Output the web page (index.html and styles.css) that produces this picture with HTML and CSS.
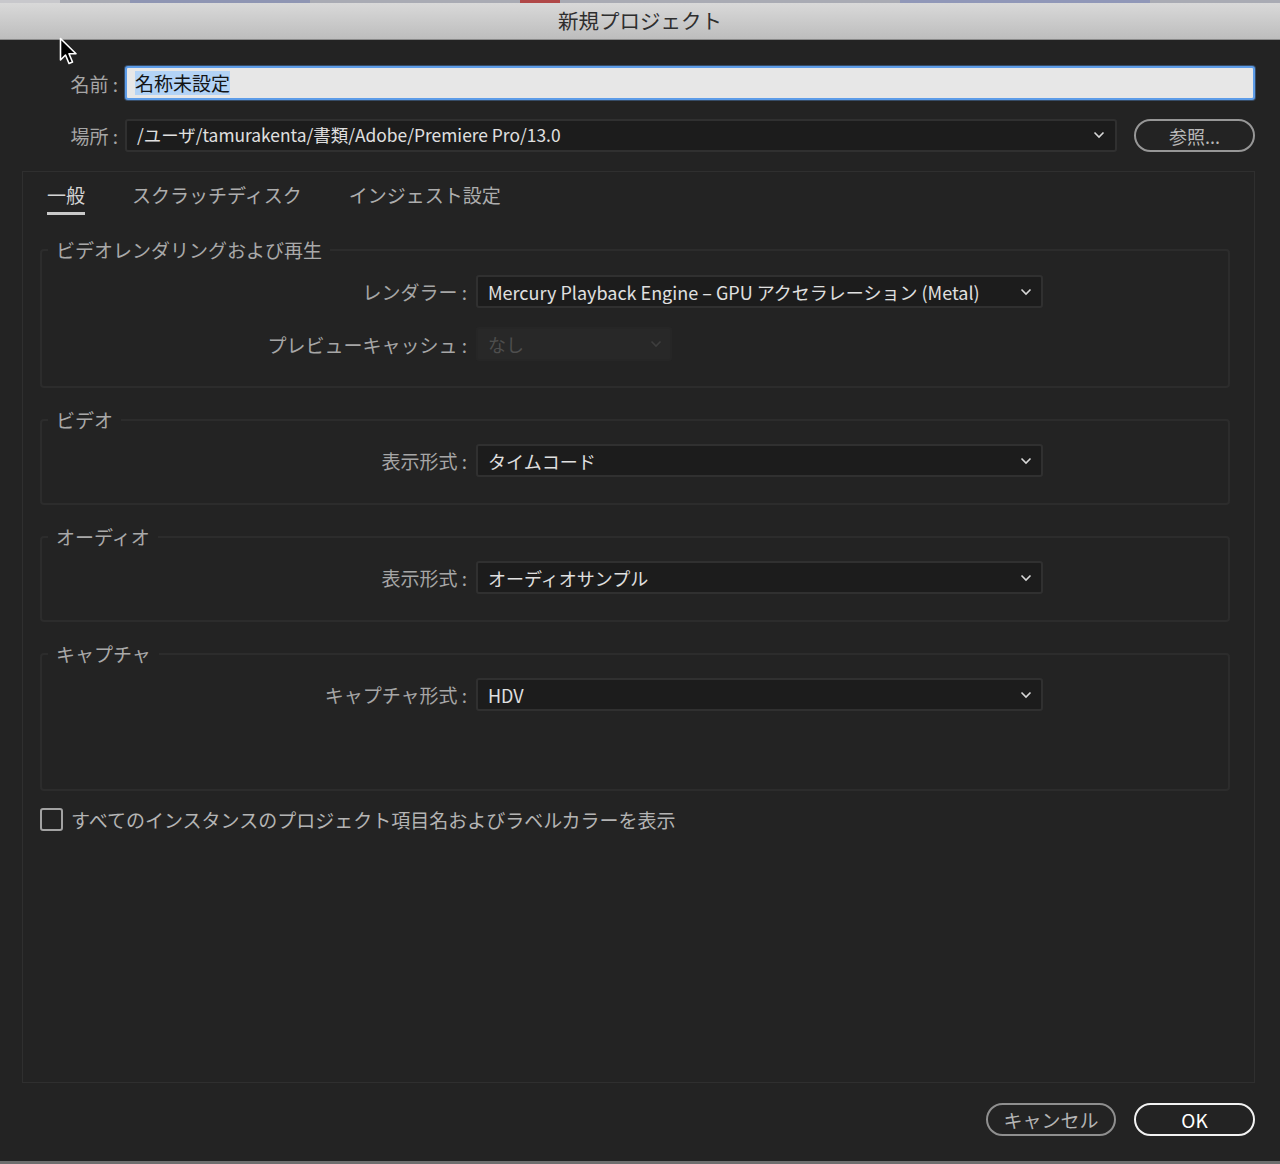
FILE: index.html
```html
<!DOCTYPE html>
<html lang="ja">
<head>
<meta charset="utf-8">
<title>新規プロジェクト</title>
<link rel="stylesheet" href="styles.css">
</head>
<body>
<div class="screen">
  <div class="desktop-strip"><span class="d1"></span><span class="d2"></span><span class="d3"></span><span class="d4"></span></div>
  <header class="titlebar">新規プロジェクト</header>
  <main class="dialog">
    <div class="form-row">
      <label class="row-label">名前 :</label>
      <div class="name-input"><span class="selected">名称未設定</span></div>
    </div>
    <div class="form-row">
      <label class="row-label">場所 :</label>
      <div class="location">
        <div class="select loc-select">
          <span class="select-text">/ユーザ/tamurakenta/書類/Adobe/Premiere Pro/13.0</span>
          <svg class="chev" width="12" height="8" viewBox="0 0 12 8"><polyline points="1.5,1.5 6,6 10.5,1.5" fill="none" stroke="#d8d8d8" stroke-width="1.6"/></svg>
        </div>
        <button class="pill browse">参照...</button>
      </div>
    </div>

    <section class="panel">
      <nav class="tabs">
        <span class="tab active">一般</span>
        <span class="tab">スクラッチディスク</span>
        <span class="tab">インジェスト設定</span>
      </nav>

      <fieldset class="group first">
        <legend>ビデオレンダリングおよび再生</legend>
        <div class="grow">
          <span class="glabel">レンダラー :</span>
          <div class="select">
            <span class="select-text">Mercury Playback Engine – GPU アクセラレーション (Metal)</span>
            <svg class="chev" width="12" height="8" viewBox="0 0 12 8"><polyline points="1.5,1.5 6,6 10.5,1.5" fill="none" stroke="#d8d8d8" stroke-width="1.6"/></svg>
          </div>
        </div>
        <div class="grow">
          <span class="glabel">プレビューキャッシュ :</span>
          <div class="select disabled">
            <span class="select-text">なし</span>
            <svg class="chev" width="12" height="8" viewBox="0 0 12 8"><polyline points="1.5,1.5 6,6 10.5,1.5" fill="none" stroke="#3e3e3e" stroke-width="1.6"/></svg>
          </div>
        </div>
      </fieldset>

      <fieldset class="group">
        <legend>ビデオ</legend>
        <div class="grow">
          <span class="glabel">表示形式 :</span>
          <div class="select">
            <span class="select-text">タイムコード</span>
            <svg class="chev" width="12" height="8" viewBox="0 0 12 8"><polyline points="1.5,1.5 6,6 10.5,1.5" fill="none" stroke="#d8d8d8" stroke-width="1.6"/></svg>
          </div>
        </div>
      </fieldset>

      <fieldset class="group">
        <legend>オーディオ</legend>
        <div class="grow">
          <span class="glabel">表示形式 :</span>
          <div class="select">
            <span class="select-text">オーディオサンプル</span>
            <svg class="chev" width="12" height="8" viewBox="0 0 12 8"><polyline points="1.5,1.5 6,6 10.5,1.5" fill="none" stroke="#d8d8d8" stroke-width="1.6"/></svg>
          </div>
        </div>
      </fieldset>

      <fieldset class="group capture">
        <legend>キャプチャ</legend>
        <div class="grow">
          <span class="glabel">キャプチャ形式 :</span>
          <div class="select">
            <span class="select-text">HDV</span>
            <svg class="chev" width="12" height="8" viewBox="0 0 12 8"><polyline points="1.5,1.5 6,6 10.5,1.5" fill="none" stroke="#d8d8d8" stroke-width="1.6"/></svg>
          </div>
        </div>
      </fieldset>

      <label class="check">
        <span class="box"></span>
        <span>すべてのインスタンスのプロジェクト項目名およびラベルカラーを表示</span>
      </label>
    </section>

    <footer class="actions">
      <button class="pill cancel">キャンセル</button>
      <button class="pill ok">OK</button>
    </footer>
  </main>
  <div class="bottom-strip"></div>

  <svg class="cursor" width="20" height="30" viewBox="0 0 20 30">
    <path d="M1.5,1.5 L1.5,23 L6.5,18 L10,26.5 L13.5,25 L10,16.8 L17,16.8 Z" fill="#000" stroke="#fff" stroke-width="1.6" stroke-linejoin="round"/>
  </svg>
</div>
</body>
</html>
```

FILE: styles.css
```css
* { box-sizing: border-box; }

html, body {
  margin: 0;
  padding: 0;
  background: #232323;
}

body {
  font-family: "Noto Sans CJK JP", "Noto Sans", sans-serif;
  color: #b0b0b0;
}

.screen {
  position: relative;
  width: 1280px;
  height: 1164px;
  display: flex;
  flex-direction: column;
  overflow: hidden;
}

.desktop-strip {
  height: 3px;
  background: #a9abb4;
  display: flex;
}
.desktop-strip span { height: 3px; display: block; }
.desktop-strip .d1 { width: 60px; background: #c8c8cc; }
.desktop-strip .d2 { width: 180px; margin-left: 70px; background: #8e95b3; }
.desktop-strip .d3 { width: 40px; margin-left: 210px; background: #b04848; }
.desktop-strip .d4 { width: 250px; margin-left: 340px; background: #9097b8; }

.titlebar {
  height: 37px;
  background: linear-gradient(#d9d9d9, #bdbdbd);
  border-bottom: 1px solid #8a8a8a;
  color: #2e2e2e;
  font-size: 20.5px;
  line-height: 35px;
  text-align: center;
}

.dialog {
  flex: 1;
  display: flex;
  flex-direction: column;
  padding: 26px 25px 25px 22px;
  min-height: 0;
}

.form-row {
  display: grid;
  grid-template-columns: 96px 1fr;
  column-gap: 7px;
  align-items: center;
}
.form-row + .form-row { margin-top: 19px; }

.row-label {
  text-align: right;
  font-size: 19px;
  color: #a6a6a6;
  white-space: nowrap;
}

.name-input {
  height: 34px;
  background: #e7e7e7;
  border: 2px solid #5d9ce8;
  border-radius: 3px;
  box-shadow: 0 0 0 1px rgba(93, 156, 232, 0.35);
  padding-left: 8px;
  display: flex;
  align-items: center;
  font-size: 19px;
  color: #141414;
}
.name-input .selected {
  background: #b3d3f6;
  line-height: 24px;
}

.location {
  display: flex;
  gap: 17px;
  align-items: center;
}

.select {
  height: 33px;
  background: #1c1c1c;
  border: 2px solid #303030;
  border-radius: 3px;
  display: flex;
  align-items: center;
  justify-content: space-between;
  padding: 0 9px 0 10px;
  font-size: 18px;
  color: #e0e0e0;
  white-space: nowrap;
}
.loc-select {
  flex: 1;
  height: 33px;
  padding-left: 10px;
  padding-right: 10px;
  font-size: 17.4px;
  line-height: 26px;
  padding-bottom: 2px;
}
.chev { flex: none; }

.select.disabled {
  width: 196px;
  height: 34px;
  background: #282828;
  border-color: #262626;
  color: #4e4e4e;
  padding-right: 8px;
}

.pill {
  font-family: inherit;
  background: transparent;
  border-radius: 17px;
  height: 33px;
  font-size: 18px;
  padding: 0;
  cursor: default;
}
.browse {
  width: 121px;
  flex: none;
  border: 2px solid #979797;
  color: #b8b8b8;
}

.panel {
  flex: 1;
  margin-top: 19px;
  border: 1px solid #2f2f2f;
  padding: 0 24px 0 17px;
}

.tabs {
  display: flex;
  gap: 47px;
  padding: 11px 0 0 7px;
}
.tab {
  font-size: 19px;
  line-height: 24px;
  padding-bottom: 5px;
  color: #adadad;
  border-bottom: 3px solid transparent;
}
.tab.active {
  color: #d4d4d4;
  border-bottom-color: #c9c9c9;
}

.group {
  margin: 23px 0 0;
  padding: 12px 0 26px;
  border: 2px solid #2c2c2c;
  border-radius: 4px;
  min-width: 0;
}
.group + .group { margin-top: 20px; }
.group.first { padding-top: 13px; padding-bottom: 25px; }
.group.capture { padding-bottom: 78px; }

.group legend {
  margin-left: 6px;
  padding: 0 8px;
  font-size: 19px;
  line-height: 24px;
  color: #a9a9a9;
}

.grow {
  display: grid;
  grid-template-columns: 425px 567px;
  column-gap: 9px;
  align-items: center;
}
.grow + .grow { margin-top: 19px; }

.glabel {
  text-align: right;
  font-size: 19px;
  color: #a6a6a6;
  white-space: nowrap;
}

.check {
  margin-top: 15px;
  display: flex;
  align-items: center;
  gap: 8px;
  font-size: 19px;
  color: #b4b4b4;
}
.check .box {
  width: 23px;
  height: 23px;
  border: 2px solid #a2a2a2;
  border-radius: 3px;
  flex: none;
}

.actions {
  margin-top: 20px;
  display: flex;
  justify-content: flex-end;
  gap: 18px;
}
.cancel {
  width: 130px;
  border: 2px solid #8f8f8f;
  color: #b4b4b4;
  font-size: 19px;
}
.ok {
  width: 121px;
  border: 2.5px solid #f2f2f2;
  color: #ffffff;
  font-size: 19px;
}

.bottom-strip {
  height: 3px;
  background: #6e6e6e;
}

.cursor {
  position: absolute;
  left: 59px;
  top: 37px;
}
```
